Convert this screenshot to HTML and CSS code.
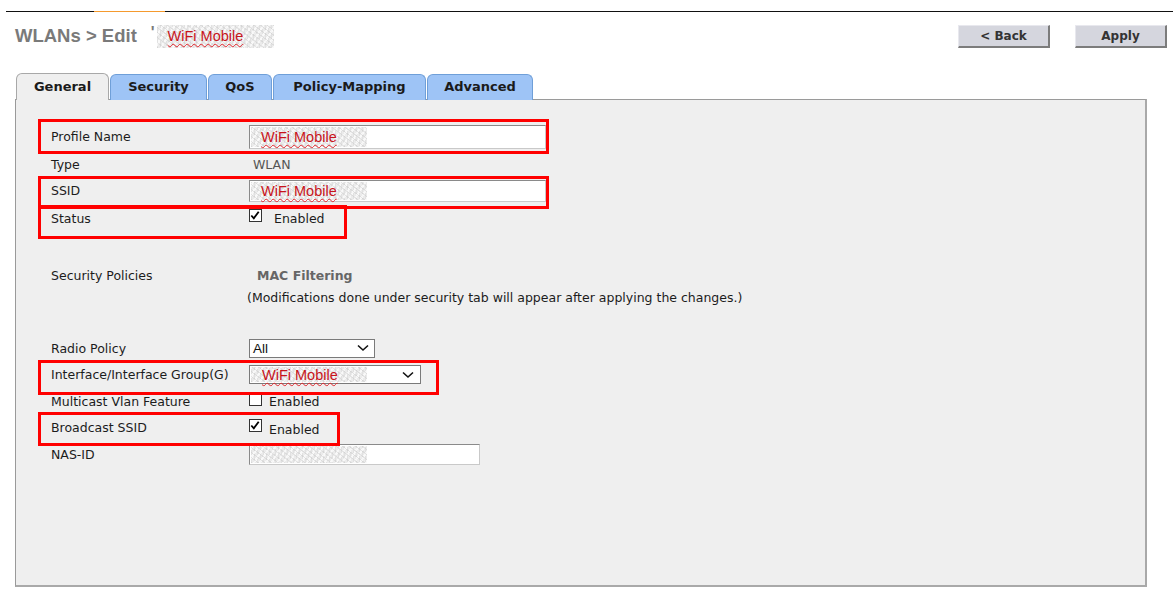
FILE: index.html
```html
<!DOCTYPE html>
<html>
<head>
<meta charset="utf-8">
<link rel="stylesheet" href="styles.css">
</head>
<body>
<div class="topbar"><span class="topbar-accent"></span></div>

<div class="header">
  <div class="title">
    <span class="title-text">WLANs &gt; Edit</span>
    <span class="quote">'</span>
    <span class="smudge title-smudge"><span class="redname">WiFi Mobile</span></span>
  </div>
  <div class="actions">
    <button class="btn">&lt; Back</button>
    <button class="btn">Apply</button>
  </div>
</div>

<div class="tabs">
  <div class="tab active t-general">General</div>
  <div class="tab t-security">Security</div>
  <div class="tab t-qos">QoS</div>
  <div class="tab t-policy">Policy-Mapping</div>
  <div class="tab t-adv">Advanced</div>
</div>

<div class="panel">
  <div class="row r-profile">
    <div class="label">Profile Name</div>
    <div class="value"><div class="field wide"><span class="smudge"><span class="redname">WiFi Mobile</span></span></div></div>
  </div>
  <div class="row r-type">
    <div class="label">Type</div>
    <div class="value plain">WLAN</div>
  </div>
  <div class="row r-ssid">
    <div class="label">SSID</div>
    <div class="value"><div class="field wide short"><span class="smudge"><span class="redname">WiFi Mobile</span></span></div></div>
  </div>
  <div class="row r-status">
    <div class="label">Status</div>
    <div class="value check-line"><span class="cb checked"><svg viewBox="0 0 13 13" width="13" height="13"><path d="M2.5 6.5 L5.2 9.5 L10.5 2.5" fill="none" stroke="#000" stroke-width="2"/></svg></span><span class="cb-label first">Enabled</span></div>
  </div>

  <div class="row r-secpol">
    <div class="label">Security Policies</div>
    <div class="value mac">MAC Filtering</div>
  </div>
  <div class="row r-note">
    <div class="label"></div>
    <div class="value note">(Modifications done under security tab will appear after applying the changes.)</div>
  </div>

  <div class="row r-radio">
    <div class="label">Radio Policy</div>
    <div class="value"><div class="select radio-select"><span class="sel-text">All</span><svg class="chev" viewBox="0 0 12 8" width="12" height="8"><path d="M1 1.5 L6 6 L11 1.5" fill="none" stroke="#111" stroke-width="1.6"/></svg></div></div>
  </div>
  <div class="row r-iface">
    <div class="label">Interface/Interface Group(G)</div>
    <div class="value"><div class="select iface-select"><span class="smudge"><span class="redname">WiFi Mobile</span></span><svg class="chev" viewBox="0 0 12 8" width="12" height="8"><path d="M1 1.5 L6 6 L11 1.5" fill="none" stroke="#111" stroke-width="1.6"/></svg></div></div>
  </div>
  <div class="row r-mcast">
    <div class="label">Multicast Vlan Feature</div>
    <div class="value check-line"><span class="cb"></span><span class="cb-label">Enabled</span></div>
  </div>
  <div class="row r-bcast">
    <div class="label">Broadcast SSID</div>
    <div class="value check-line"><span class="cb checked"><svg viewBox="0 0 13 13" width="13" height="13"><path d="M2.5 6.5 L5.2 9.5 L10.5 2.5" fill="none" stroke="#000" stroke-width="2"/></svg></span><span class="cb-label">Enabled</span></div>
  </div>
  <div class="row r-nas">
    <div class="label">NAS-ID</div>
    <div class="value"><div class="field nas"><span class="smudge"></span></div></div>
  </div>

  <div class="mark m-profile"></div>
  <div class="mark m-ssid"></div>
  <div class="mark m-status"></div>
  <div class="mark m-iface"></div>
  <div class="mark m-bcast"></div>
</div>
</body>
</html>
```

FILE: styles.css
```css
html, body {
  margin: 0;
  padding: 0;
  background: #ffffff;
}
body {
  font-family: "DejaVu Sans", Verdana, sans-serif;
  color: #1a1a1a;
  width: 1173px;
  height: 599px;
  overflow: hidden;
}

.topbar {
  display: flex;
  margin: 11px 0 0 6px;
  height: 1px;
  background: #111;
}
.topbar-accent {
  display: block;
  margin-left: 88px;
  width: 71px;
  height: 1px;
  background: #f59a2e;
}

.header {
  display: flex;
  justify-content: space-between;
  align-items: center;
  margin-top: 12px;
  height: 24px;
  padding: 0 6px 0 15px;
}
.title {
  display: flex;
  align-items: center;
}
.title-text {
  font-family: "Liberation Sans", Arial, sans-serif;
  font-weight: bold;
  font-size: 18.5px;
  color: #7a7a7a;
}
.quote {
  font-family: "Liberation Sans", Arial, sans-serif;
  font-weight: bold;
  font-size: 16px;
  color: #7a7a7a;
  margin: -6px 0 0 14px;
}
.smudge {
  display: inline-flex;
  align-items: center;
  width: 116px;
  height: 100%;
  box-sizing: border-box;
  background-color: #ebebeb;
  background-image:
    repeating-linear-gradient(37deg, rgba(190,190,190,0.35) 0 1px, transparent 1px 4px),
    repeating-linear-gradient(-58deg, rgba(255,255,255,0.7) 0 2px, transparent 2px 5px),
    repeating-linear-gradient(90deg, rgba(210,210,210,0.4) 0 1px, transparent 1px 3px);
}
.title-smudge {
  height: 23px;
  width: 117px;
  margin-left: 2px;
  padding-left: 11px;
}
.redname {
  font-family: "Liberation Sans", Arial, sans-serif;
  font-size: 14.5px;
  color: #c8141b;
  text-decoration: underline wavy #e0262c;
  text-decoration-thickness: 1px;
  text-underline-offset: 2px;
  white-space: nowrap;
}

.actions {
  display: flex;
  gap: 25px;
}
.btn {
  width: 92px;
  height: 23px;
  padding: 0;
  font-family: "DejaVu Sans", Verdana, sans-serif;
  font-weight: bold;
  font-size: 12px;
  color: #333;
  background: #d5d6de;
  border-style: solid;
  border-width: 1px 2px 2px 1px;
  border-color: #e8e8ee #7c7c7c #7c7c7c #e8e8ee;
}

.tabs {
  display: flex;
  margin: 25px 0 0 16px;
  height: 26px;
  position: relative;
  z-index: 1;
}
.tab {
  box-sizing: border-box;
  height: 26px;
  display: flex;
  align-items: center;
  justify-content: center;
  font-weight: bold;
  font-size: 13px;
  color: #1b1b1b;
  background: #9ec4f6;
  border: 1px solid #6f9fd8;
  border-bottom: none;
  border-radius: 6px 6px 0 0;
  margin-right: 1px;
  margin-top: 1px;
  padding-bottom: 2px;
}
.t-general  { width: 93px; }
.t-security { width: 97px; }
.t-qos      { width: 64px; }
.t-policy   { width: 153px; }
.t-adv      { width: 106px; }
.tab.active {
  background: #efefef;
  border-color: #a8a8a8;
  height: 27px;
  margin-top: 0;
  margin-bottom: -1px;
}

.panel {
  position: relative;
  box-sizing: border-box;
  margin-left: 15px;
  width: 1132px;
  height: 488px;
  background: #efefef;
  border: 1px solid #9a9a9a;
  border-right: 2px solid #a9a9a9;
  border-bottom: 2px solid #a9a9a9;
  padding: 20px 0 0 35px;
}

.row {
  display: grid;
  grid-template-columns: 198px 1fr;
  align-items: center;
  font-size: 12.5px;
}
.label {
  color: #1c1c1c;
}
.value {
  display: flex;
  align-items: center;
}
.plain { color: #555; padding-left: 4px; }
.mac { color: #666; font-weight: bold; font-size: 12.5px; padding-left: 8px; }
.note { color: #1c1c1c; margin-left: -2px; }

.r-profile { height: 33px; }
.r-type    { height: 23px; }
.r-ssid    { height: 29px; }
.r-status  { height: 26px; }
.r-secpol  { height: 20px; margin-top: 34px; }
.r-note    { height: 20px; margin-top: 2px; }
.r-radio   { height: 20px; margin-top: 31px; }
.r-iface   { height: 33px; }
.r-mcast   { height: 20px; }
.r-bcast   { height: 33px; }
.r-nas     { height: 21px; }

.field {
  box-sizing: border-box;
  height: 24px;
  background: #fff;
  border: 1px solid #8a8a8a;
  border-right-color: #c9c9c9;
  border-bottom-color: #c9c9c9;
  padding: 1px;
  display: flex;
}
.field.wide { width: 297px; }
.field.short { height: 22px; }
.field .smudge { padding-left: 10px; height: auto; }
.field.nas { width: 231px; height: 21px; }

.check-line { gap: 0; }
.cb {
  box-sizing: border-box;
  width: 13px;
  height: 13px;
  background: #fff;
  border: 1px solid #333;
  display: inline-flex;
  margin-top: -5px;
}
.cb svg { margin: -1px 0 0 -1px; }
.r-mcast .cb, .r-bcast .cb { margin-top: -4px; }
.r-bcast .cb-label { margin-top: 3px; }
.cb-label { margin-left: 7px; color: #1c1c1c; }
.cb-label.first { margin-left: 12px; }

.select {
  box-sizing: border-box;
  height: 19px;
  background: #fff;
  border: 1px solid #7a7a7a;
  display: flex;
  align-items: center;
  position: relative;
}
.radio-select { width: 126px; }
.iface-select { width: 172px; padding: 1px; }
.iface-select .smudge { height: 100%; padding-left: 11px; }
.sel-text {
  font-family: "Liberation Sans", Arial, sans-serif;
  font-size: 13.5px;
  color: #111;
  padding-left: 3px;
  padding-top: 1px;
}
.chev {
  margin-left: auto;
  margin-right: 5px;
}

.mark {
  position: absolute;
  box-sizing: border-box;
  border: 3px solid #ff0000;
  left: 22px;
}
.m-profile { top: 19px;  width: 511px; height: 35px; }
.m-ssid    { top: 76px;  width: 511px; height: 33px; }
.m-status  { top: 105px; width: 309px; height: 34px; }
.m-iface   { top: 260px; width: 401px; height: 35px; }
.m-bcast   { top: 312px; width: 302px; height: 34px; }
```
